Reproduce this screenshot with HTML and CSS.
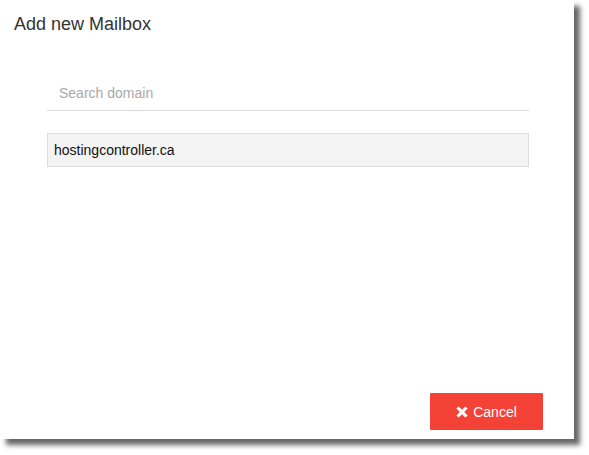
FILE: index.html
```html
<!DOCTYPE html>
<html lang="en">
<head>
  <meta charset="UTF-8">
  <title>Add new Mailbox</title>
  <link rel="stylesheet" href="styles.css">
</head>
<body>
  <div class="dialog">
    <h1 class="dialog-title">Add new Mailbox</h1>

    <div class="dialog-body">
      <input class="search-input" type="text" placeholder="Search domain">
      <ul class="domain-list">
        <li class="domain-item">hostingcontroller.ca</li>
      </ul>
    </div>

    <div class="dialog-footer">
      <button class="btn-cancel">
        <svg class="icon-times" viewBox="0 0 12 12" width="12" height="12">
          <path d="M2.6 0.4 L6 3.8 L9.4 0.4 L11.6 2.6 L8.2 6 L11.6 9.4 L9.4 11.6 L6 8.2 L2.6 11.6 L0.4 9.4 L3.8 6 L0.4 2.6 Z" fill="#fff"/>
        </svg>
        Cancel
      </button>
    </div>
  </div>
</body>
</html>
```

FILE: styles.css
```css
html, body {
  height: 100%;
}

body {
  margin: 0;
  background: #fff;
  font-family: "Liberation Sans", Arial, sans-serif;
  color: #333;
}

.dialog {
  width: 574px;
  height: 439px;
  background: #fff;
  box-shadow: 6px 6px 5px rgba(0, 0, 0, 0.6);
  display: flex;
  flex-direction: column;
  box-sizing: border-box;
}

.dialog-title {
  margin: 0;
  padding: 14px 14px 0;
  font-size: 18px;
  font-weight: normal;
  line-height: 20px;
  color: #333;
}

.dialog-body {
  flex: 1;
  padding: 42px 45px 0 47px;
}

.search-input {
  display: block;
  width: 100%;
  height: 35px;
  box-sizing: border-box;
  border: none;
  border-bottom: 1px solid #ddd;
  padding: 0 12px;
  font-family: inherit;
  font-size: 14px;
  color: #333;
  outline: none;
  background: transparent;
}

.search-input::placeholder {
  color: #a9a9a9;
}

.domain-list {
  list-style: none;
  margin: 22px 0 0;
  padding: 0;
}

.domain-item {
  height: 34px;
  box-sizing: border-box;
  border: 1px solid #ddd;
  background: #f4f4f4;
  padding: 0 6px;
  font-size: 14px;
  line-height: 32px;
  color: #111;
}

.dialog-footer {
  display: flex;
  justify-content: flex-end;
  padding: 0 31px 9px 0;
}

.btn-cancel {
  display: flex;
  align-items: center;
  justify-content: center;
  gap: 5px;
  width: 113px;
  height: 37px;
  border: none;
  border-radius: 1px;
  background: #f44336;
  color: #fff;
  font-family: inherit;
  font-size: 14px;
  cursor: pointer;
}
```
